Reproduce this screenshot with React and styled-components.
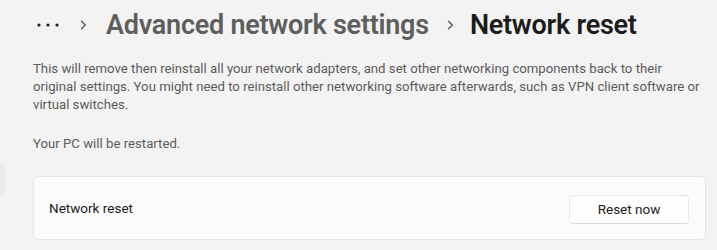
import React from "react";
import styled, { createGlobalStyle } from "styled-components";

const Global = createGlobalStyle`
  html, body { margin: 0; padding: 0; background: #f3f3f3; overflow: hidden; }
  body { font-family: Roboto, "Noto Sans", sans-serif; }
`;

const Page = styled.div`
  display: flex;
  width: 717px;
  height: 250px;
  background: #f3f3f3;
`;

const Rail = styled.div`
  width: 5px;
  flex: none;
  padding-top: 163px;
`;

const RailItem = styled.div`
  height: 32px;
  background: #eaeaea;
  border-radius: 0 4px 4px 0;
`;

const Main = styled.div`
  flex: 1;
  min-width: 0;
  padding: 9px 11px 0 28px;
  display: flex;
  flex-direction: column;
`;

const Breadcrumb = styled.div`
  display: flex;
  align-items: center;
  height: 32px;
  padding-left: 4px;
`;

const Crumb = styled.span`
  font-size: 27px;
  font-weight: 600;
  color: ${(p) => (p.$current ? "#1b1b1b" : "#5e5e5e")};
  letter-spacing: -0.25px;
  line-height: 32px;
  white-space: nowrap;
`;

const Sep = styled.span`
  display: flex;
  align-items: center;
  margin: 0 ${(p) => p.$right}px 0 ${(p) => p.$left}px;
`;

const Text = styled.p`
  margin: ${(p) => p.$top}px 0 0;
  font-size: 13.2px;
  line-height: 18px;
  color: #5b5b5b;
  white-space: nowrap;
`;

const Card = styled.div`
  margin-top: 23px;
  height: 64px;
  box-sizing: border-box;
  background: #fbfbfb;
  border: 1px solid #e6e6e6;
  border-radius: 4px;
  display: flex;
  align-items: center;
  justify-content: space-between;
  padding: 0 16px 0 15px;
`;

const Label = styled.span`
  font-size: 13.5px;
  color: #1b1b1b;
`;

const Button = styled.button`
  width: 120px;
  height: 29px;
  margin-top: 2px;
  background: #fefefe;
  border: 1px solid #e9e9e9;
  border-bottom-color: #d9d9d9;
  border-radius: 4px;
  font-family: inherit;
  font-size: 13.5px;
  color: #1b1b1b;
  padding: 0;
  cursor: pointer;
`;

const Dots = () => (
  <svg width="22" height="6" viewBox="0 0 22 6">
    <circle cx="2" cy="3" r="1.6" fill="#1b1b1b" />
    <circle cx="11" cy="3" r="1.6" fill="#1b1b1b" />
    <circle cx="20" cy="3" r="1.6" fill="#1b1b1b" />
  </svg>
);

const Chevron = () => (
  <svg width="7" height="10" viewBox="0 0 7 10">
    <path d="M1.5 1.2 L5.3 5 L1.5 8.8" fill="none" stroke="#5e5e5e" strokeWidth="1.5" strokeLinecap="round" strokeLinejoin="round" />
  </svg>
);

export default function App() {
  return (
    <>
      <Global />
      <Page>
        <Rail>
          <RailItem />
        </Rail>
        <Main>
          <Breadcrumb>
            <Dots />
            <Sep $left={21} $right={19}>
              <Chevron />
            </Sep>
            <Crumb>Advanced network settings</Crumb>
            <Sep $left={18} $right={16}>
              <Chevron />
            </Sep>
            <Crumb $current>Network reset</Crumb>
          </Breadcrumb>
          <Text $top={19}>
            This will remove then reinstall all your network adapters, and set other networking components back to their
            <br />
            original settings. You might need to reinstall other networking software afterwards, such as VPN client software or
            <br />
            virtual switches.
          </Text>
          <Text $top={21}>Your PC will be restarted.</Text>
          <Card>
            <Label>Network reset</Label>
            <Button>Reset now</Button>
          </Card>
        </Main>
      </Page>
    </>
  );
}
